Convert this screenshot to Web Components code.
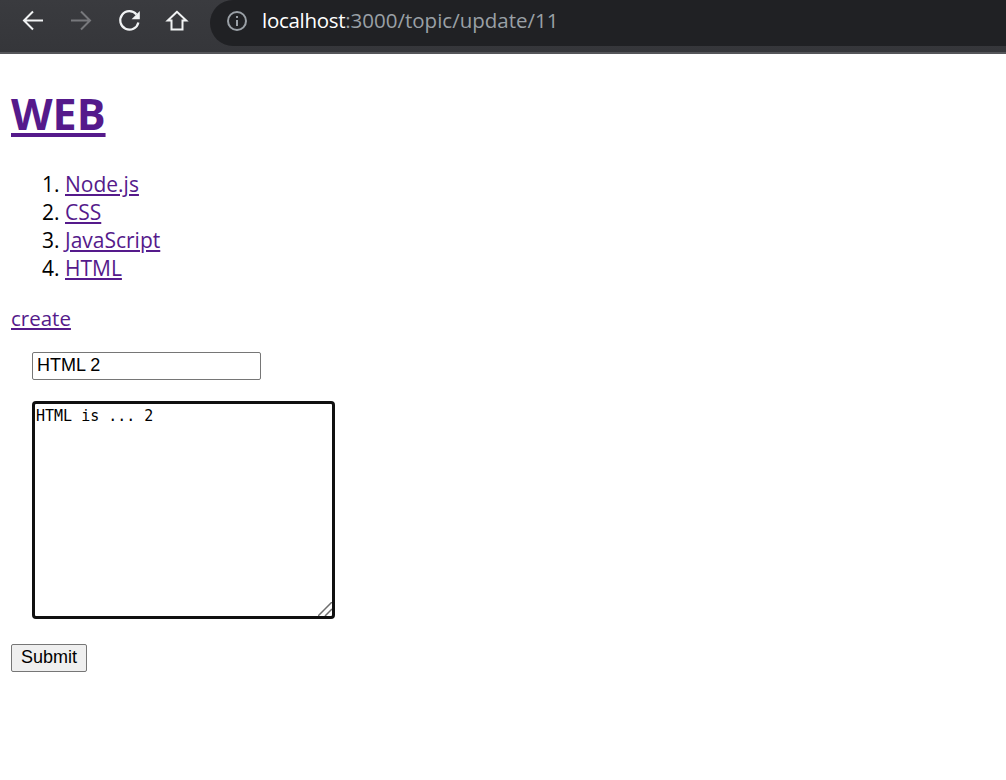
<!DOCTYPE html>
<html>
<head>
<meta charset="utf-8">
<title>WEB</title>
<style>
  html, body { margin: 0; padding: 0; background: #fff; }
</style>
</head>
<body>
<browser-bar url-host="localhost" url-path=":3000/topic/update/11"></browser-bar>
<topic-page>
  <topic-list>
    <a href="#">Node.js</a>
    <a href="#">CSS</a>
    <a href="#">JavaScript</a>
    <a href="#">HTML</a>
  </topic-list>
  <update-form title-value="HTML 2" body-value="HTML is ... 2"></update-form>
</topic-page>

<script>
// browser chrome at the top of the picture
class BrowserBar extends HTMLElement {
  constructor() {
    super();
    let shadow = this.attachShadow({mode: 'open'});
    shadow.innerHTML = `
    <style>
      :host {
        display: flex;
        height: 52px;
        background: linear-gradient(#3a3b3f, #35363a);
        border-bottom: 2px solid #55565a;
        align-items: flex-start;
      }
      .nav {
        display: flex;
        gap: 16px;
        padding: 5px 17px 0 17px;
      }
      .nav svg {
        width: 32px;
        height: 32px;
        display: block;
        fill: none;
        stroke: #f1f3f4;
        stroke-width: 2;
      }
      .nav svg.off { stroke: #77787c; }
      .url {
        flex: 1;
        box-sizing: border-box;
        height: 46px;
        background: #202124;
        border-radius: 23px 0 0 23px;
        display: flex;
        align-items: center;
        font: 20.500px "Open Sans", "Noto Sans", sans-serif;
        color: #9aa0a6;
        padding: 0 0 4px 17px;
      }
      .url svg { width: 20px; height: 20px; margin-right: 15px; flex: none; }
      .url span { position: relative; top: -1px; }
      .url b { font-weight: 500; color: #fff; letter-spacing: -0.3px; }
    </style>
    <div class="nav">
      <svg viewBox="0 0 32 32"><path d="M26 15.500H7.500M16 6.500 7 15.500l9 9"/></svg>
      <svg class="off" viewBox="0 0 32 32"><path d="M6 15.500h18.500M16 6.500l9 9-9 9"/></svg>
      <svg viewBox="0 0 32 32" style="stroke-width:2.200"><path d="M23.500 9.500A9.200 9.200 0 1 0 25.400 17.500"/><path d="M26.800 6v8.200h-8.200z" fill="#f1f3f4" stroke="none"/></svg>
      <svg viewBox="0 0 32 32"><path d="M16 6.800 6.800 15.500H10.500V24.500H21.500V15.500H25.200Z"/></svg>
    </div>
    <div class="url">
      <svg viewBox="0 0 20 20"><circle cx="10" cy="10" r="9" fill="none" stroke="#9aa0a6" stroke-width="2"/><path d="M9 9h2v6H9zM9 5h2v2H9z" fill="#9aa0a6"/></svg>
      <span><b>${this.getAttribute('url-host')}</b>${this.getAttribute('url-path')}</span>
    </div>
    `;
  }
}

// heading, the slotted list and the create link
class TopicPage extends HTMLElement {
  constructor() {
    super();
    let shadow = this.attachShadow({mode: 'open'});
    shadow.innerHTML = `
    <style>
      :host {
        display: block;
        padding: 0 11px;
        font: 21px "Open Sans", "Noto Sans", sans-serif;
        color: #000;
      }
      a { color: #551a8b; }
      h1 {
        margin: 0;
        padding-top: 27px;
        font-size: 43px;
        line-height: 66px;
        font-weight: 700;
      }
      .create {
        margin-top: 22px;
        line-height: 28px;
        font-size: 20.500px;
      }
    </style>
    <h1><a href="#">WEB</a></h1>
    <slot></slot>
    <div class="create"><a href="#">create</a></div>
    <slot name="form"></slot>
    `;
    this.querySelector('update-form').slot = 'form';
  }
}

class TopicList extends HTMLElement {
  constructor() {
    super();
    let shadow = this.attachShadow({mode: 'open'});
    let items = [...this.querySelectorAll('a')].map((a) => {
      return '<li><a href="#">' + a.textContent + '</a></li>';
    }).join('');
    shadow.innerHTML = `
    <style>
      :host { display: block; margin-top: 23px; }
      ol {
        margin: 0;
        padding: 0 0 0 54px;
        line-height: 28px;
      }
      a { color: #551a8b; }
    </style>
    <ol>${items}</ol>
    `;
  }
}

// title input, body textarea, submit
class UpdateForm extends HTMLElement {
  constructor() {
    super();
    let shadow = this.attachShadow({mode: 'open'});
    shadow.innerHTML = `
    <style>
      :host { display: block; padding-top: 20px; }
      .field { padding-left: 21px; }
      input, textarea, button { box-sizing: border-box; margin: 0; display: block; }
      input {
        width: 229px;
        height: 28px;
        border: 1px solid #767676;
        border-radius: 2px;
        padding: 0 4px 2px;
        font: 18px "Liberation Sans", Arial, sans-serif;
        color: #000;
      }
      .area {
        position: relative;
        margin-top: 21px;
        width: 303px;
      }
      textarea {
        width: 303px;
        height: 218px;
        border: 3px solid #101010;
        border-radius: 4px;
        padding: 3px 0 3px 1px;
        outline: 0;
        resize: none;
        font: 15px/18px "DejaVu Sans Mono", "Liberation Mono", monospace;
        color: #000;
      }
      .grip {
        position: absolute;
        right: 3px;
        bottom: 3px;
        width: 14px;
        height: 14px;
        display: block;
        fill: none;
        stroke: #6e6e6e;
        stroke-width: 1.500;
      }
      button {
        margin-top: 25px;
        width: 76px;
        height: 28px;
        padding: 0 0 2px;
        border: 1px solid #767676;
        border-radius: 2px;
        background: #efefef;
        font: 18px "Liberation Sans", Arial, sans-serif;
        color: #000;
      }
    </style>
    <div class="field"><input type="text" value="${this.getAttribute('title-value')}"></div>
    <div class="field">
      <div class="area">
        <textarea>${this.getAttribute('body-value')}</textarea>
        <svg class="grip" viewBox="0 0 14 14"><path d="M0 14 14 0M7 14l7-7"/></svg>
      </div>
    </div>
    <button>Submit</button>
    `;
  }
}

customElements.define('browser-bar', BrowserBar);
customElements.define('topic-list', TopicList);
customElements.define('update-form', UpdateForm);
customElements.define('topic-page', TopicPage);
</script>
</body>
</html>
